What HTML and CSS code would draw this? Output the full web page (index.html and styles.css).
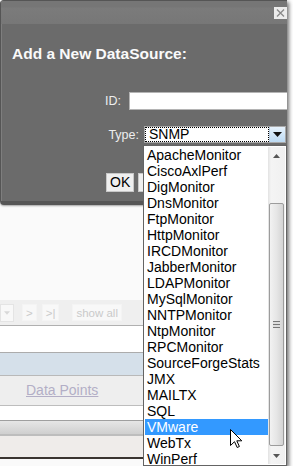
FILE: index.html
```html
<!DOCTYPE html>
<html lang="en">
<head>
    <meta charset="UTF-8">
    <meta name="viewport" content="width=device-width, initial-scale=1.0">
    <title>Add a New DataSource</title>
    <link rel="stylesheet" href="styles.css">
</head>
<body>
    <div class="screen">
        <div class="dialog">
            <div class="dialog-bar">
                <span class="close">
                    <svg width="11" height="10" viewBox="0 0 11 10"><path d="M2 1.5 L9 8.5 M9 1.5 L2 8.5" stroke="#8a8a8a" stroke-width="1.4"/></svg>
                </span>
            </div>
            <h2 class="dialog-title">Add a New DataSource:</h2>
            <div class="field-row id-row">
                <label for="dsId">ID:</label>
                <input type="text" id="dsId" name="dsId">
            </div>
            <div class="field-row type-row">
                <label>Type:</label>
                <div class="select">
                    <span class="select-value">SNMP</span>
                    <span class="select-btn">
                        <svg width="9" height="5" viewBox="0 0 9 5"><path d="M0 0 H9 L4.5 5 Z" fill="#111"/></svg>
                    </span>
                </div>
            </div>
            <div class="buttons">
                <button type="button">OK</button>
                <!-- cancel button sits under the open list -->
                <button type="button" class="btn-hidden" aria-label="Cancel"></button>
            </div>
        </div>

        <div class="page">
            <div class="page-blank"></div>
            <div class="pager">
                <span class="pager-box pager-select">
                    <svg width="7" height="4" viewBox="0 0 7 4"><path d="M0 0 H7 L3.5 4 Z" fill="#d8d8d8"/></svg>
                </span>
                <span class="pager-box">&gt;</span>
                <span class="pager-box">&gt;|</span>
                <span class="pager-box pager-all">show all</span>
            </div>
            <div class="page-gap"></div>
            <div class="grid-head"></div>
            <div class="grid-row"><a href="#">Data Points</a></div>
            <div class="page-gap small"></div>
            <div class="hscroll"><span class="hscroll-grip"></span></div>
            <div class="footer"></div>
        </div>

        <div class="dropdown">
            <ul class="options">
                <li>ApacheMonitor</li>
                <li>CiscoAxlPerf</li>
                <li>DigMonitor</li>
                <li>DnsMonitor</li>
                <li>FtpMonitor</li>
                <li>HttpMonitor</li>
                <li>IRCDMonitor</li>
                <li>JabberMonitor</li>
                <li>LDAPMonitor</li>
                <li>MySqlMonitor</li>
                <li>NNTPMonitor</li>
                <li>NtpMonitor</li>
                <li>RPCMonitor</li>
                <li>SourceForgeStats</li>
                <li>JMX</li>
                <li>MAILTX</li>
                <li>SQL</li>
                <li class="selected">VMware</li>
                <li>WebTx</li>
                <li>WinPerf</li>
            </ul>
            <div class="vscroll">
                <span class="vscroll-arrow">
                    <svg width="7" height="4" viewBox="0 0 7 4"><path d="M0 4 H7 L3.5 0 Z" fill="#555"/></svg>
                </span>
                <span class="vscroll-track">
                    <span class="vscroll-thumb"><span class="vscroll-grip"></span></span>
                </span>
                <span class="vscroll-arrow">
                    <svg width="7" height="4" viewBox="0 0 7 4"><path d="M0 0 H7 L3.5 4 Z" fill="#555"/></svg>
                </span>
            </div>
        </div>

        <svg class="cursor" width="13" height="20" viewBox="0 0 13 20">
            <path d="M0.5 0.5 L0.5 16.5 L4.5 12.7 L7.2 18.5 L9.4 17.5 L6.8 11.8 L11.8 11.8 Z" fill="#fff" stroke="#000" stroke-width="1"/>
        </svg>
    </div>
</body>
</html>
```

FILE: styles.css
```css
body {
    margin: 0;
    background-color: #fff;
    font-family: "Liberation Sans", Arial, sans-serif;
}
.screen {
    position: relative;
    width: 287px;
    height: 466px;
    overflow: hidden;
    background-color: #fafafa;
    box-shadow: 2px 2px 4px rgba(0, 0, 0, 0.55);
}

/* dialog */
.dialog {
    box-sizing: border-box;
    width: 300px;
    height: 205px;
    background-color: #6b6b6b;
    border: 1px solid #555;
    border-bottom: 4px solid #565656;
    border-radius: 4px;
    box-shadow: inset 1px 1px 0 #7e7e7e, 0 1px 2px rgba(0, 0, 0, 0.35);
}
.dialog-bar {
    height: 23px;
    display: flex;
    justify-content: flex-end;
    align-items: flex-start;
    padding-right: 12px;
    background: linear-gradient(#767676, #767676 6px, #7b7b7b 7px, #777 23px);
}
.close {
    display: flex;
    align-items: center;
    justify-content: center;
    width: 13px;
    height: 12px;
    margin-top: 6px;
    background-color: #ececec;
}
.dialog-title {
    margin: 21px 0 0;
    padding-left: 11px;
    font-size: 15.5px;
    line-height: 18px;
    font-weight: bold;
    color: #fafafa;
}
.field-row {
    display: flex;
    align-items: center;
    font-size: 12.5px;
    color: #eee;
}
.field-row label {
    text-align: right;
}
.id-row {
    margin-top: 29px;
}
.id-row label {
    width: 121px;
    margin-right: 8px;
}
.id-row input {
    box-sizing: border-box;
    width: 170px;
    height: 18px;
    margin: 0;
    padding: 0 2px;
    border: 1px solid #b4b4b4;
    background-color: #fff;
}
.type-row {
    margin-top: 16px;
}
.type-row label {
    width: 138px;
    margin-right: 5px;
}
.select {
    box-sizing: border-box;
    display: flex;
    width: 142px;
    height: 17px;
    border: 1px solid #a9a9a9;
    background-color: #fff;
}
.select-value {
    flex: 1;
    box-sizing: border-box;
    height: 15px;
    padding-left: 3px;
    border: 1px dotted #000;
    font-size: 14px;
    line-height: 13px;
    color: #000;
}
.select-btn {
    display: flex;
    align-items: center;
    justify-content: center;
    width: 15px;
    background: linear-gradient(#e6f2fc, #bcdaf3);
    border-left: 1px solid #b8cde0;
}
.buttons {
    display: flex;
    gap: 4px;
    margin-top: 30px;
    padding-left: 105px;
}
.buttons button {
    height: 19px;
    margin: 0;
    padding: 0 3px;
    border: 1px solid #c8c8c8;
    background-color: #efefef;
    font-family: inherit;
    font-size: 14px;
    line-height: 17px;
    color: #000;
}
.buttons .btn-hidden {
    width: 50px;
}

/* page under the dialog */
.page-blank {
    height: 95px;
}
.pager {
    display: flex;
    align-items: center;
    gap: 5px;
    height: 25px;
    background-color: #efefef;
    border-bottom: 1px solid #b0b0b0;
}
.pager-box {
    display: flex;
    align-items: center;
    justify-content: center;
    height: 15px;
    padding: 0 3px;
    background-color: #f8f8f8;
    border: 1px solid #f4f4f4;
    font-size: 11.5px;
    color: #cacaca;
}
.pager-select {
    width: 6px;
    height: 16px;
    margin-right: 3px;
    border-color: #e4e4e4;
}
.pager-all {
    margin-left: 8px;
}
.page-gap {
    height: 26px;
    background-color: #fff;
    border-bottom: 1px solid #acacac;
}
.page-gap.small {
    height: 14px;
    border-bottom-color: #9f9f9f;
}
.grid-head {
    height: 22px;
    background-color: #d5e0ea;
    border-bottom: 1px solid #b9b9b9;
}
.grid-row {
    height: 29px;
    background-color: #eee;
    border-bottom: 1px solid #bdbdbd;
    padding-left: 26px;
}
.grid-row a {
    font-size: 14px;
    line-height: 29px;
    color: #b3aec6;
}
.hscroll {
    display: flex;
    justify-content: flex-end;
    align-items: center;
    height: 13px;
    padding-right: 10px;
    background: linear-gradient(#e6e6e6, #cfcfcf);
    border-bottom: 2px solid #bdbdbd;
}
.hscroll-grip {
    width: 7px;
    height: 7px;
    background: repeating-linear-gradient(90deg, #777 0, #777 1px, #ddd 1px, #ddd 3px);
}
.footer {
    height: 21px;
    background-color: #efecea;
    border-bottom: 2px solid #3a3430;
}

/* open drop-down list */
.dropdown {
    position: absolute;
    left: 143px;
    top: 145px;
    right: 0;
    bottom: 0;
    display: flex;
    padding: 1px;
    background-color: #fff;
    border: 1px solid #646464;
    overflow: hidden;
}
.options {
    flex: 1;
    margin: 0;
    padding: 0;
    list-style: none;
}
.options li {
    height: 16px;
    padding-left: 2px;
    font-size: 14px;
    line-height: 16px;
    color: #000;
    white-space: nowrap;
}
.options li.selected {
    background-color: #3399ff;
    color: #fff;
}
.vscroll {
    display: flex;
    flex-direction: column;
    width: 17px;
    background: linear-gradient(90deg, #e2e2e2, #f4f4f4 3px, #f0f0f0);
}
.vscroll-arrow {
    display: flex;
    align-items: center;
    justify-content: center;
    height: 17px;
}
.vscroll-track {
    flex: 1;
    display: flex;
    flex-direction: column;
    padding: 39px 1px 1px;
}
.vscroll-thumb {
    flex: 1;
    display: flex;
    align-items: center;
    justify-content: center;
    border: 1px solid #9c9c9c;
    border-radius: 2px;
    background: linear-gradient(90deg, #f2f2f2, #e6e6e6 50%, #d4d4d4);
}
.vscroll-grip {
    width: 7px;
    height: 7px;
    background: repeating-linear-gradient(#777 0, #777 1px, #ddd 1px, #ddd 3px);
}

.cursor {
    position: absolute;
    left: 230px;
    top: 429px;
}
```
